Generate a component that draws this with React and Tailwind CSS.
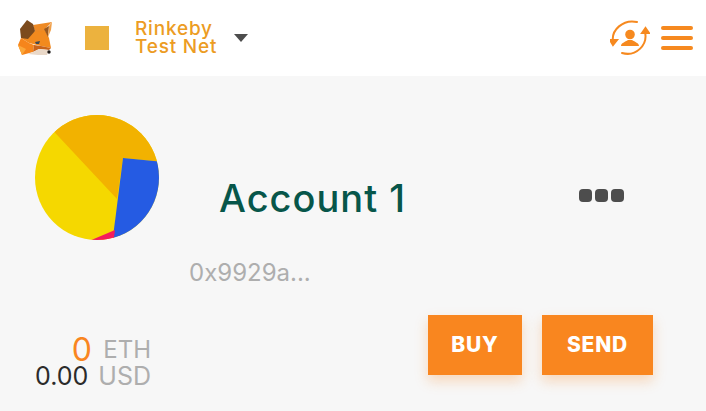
const FONT = "font-['Inter',sans-serif]";

function Fox() {
  return (
    <svg width="36" height="38" viewBox="0 0 36 38" className="shrink-0">
      <polygon points="3,19 17,12 26,9 31,19 33,29 23,27 11,24" fill="#f28a1e" />
      <polygon points="15,6 34,3 28,9 26,12 17,13" fill="#ee8a25" />
      <polygon points="9,1 2,10 3,19 10,20 17,12 15,5" fill="#7c4a1c" />
      <polygon points="26,10 31,7 30,18" fill="#99581f" />
      <polygon points="34,3 31,7 30,18 33,11" fill="#f0a04a" />
      <polygon points="3,19 0,26 4,36 15,33 16,26 11,24" fill="#f6851b" />
      <polygon points="0,26 4,36 8,30" fill="#fba73a" />
      <polygon points="16,26 23,27 33,29 31,31 21,30 15,33" fill="#c9641a" />
      <polygon points="15,33 21,30 31,31 29,36 20,36 10,35" fill="#e9d8c8" />
      <polygon points="17,23 22,22 21,25 18,25" fill="#3f4a55" />
      <circle cx="31" cy="33" r="1.7" fill="#1f1a17" />
    </svg>
  );
}

function AccountSwitch() {
  return (
    <svg width="40" height="38" viewBox="0 0 40 38" fill="none" stroke="#f6891f" strokeWidth="2" strokeLinecap="round" className="shrink-0">
      <path d="M3 23 C1 11 13 0 27 3" />
      <path d="M35 13 C38 26 26 38 12 34" />
      <path d="M0 21 L3 26 L7 21 Z" fill="#f6891f" />
      <path d="M32 14 L35.5 9 L39 14 Z" fill="#f6891f" />
      <circle cx="20" cy="15.5" r="4.8" fill="#f6891f" stroke="none" />
      <path d="M11 27 C11 24 15 23 18 21 L22 21 C25 23 29 24 29 27 Z" fill="#f6891f" stroke="none" />
    </svg>
  );
}

function Identicon() {
  return (
    <svg width="124" height="125" viewBox="0 0 124 125" className="shrink-0">
      <defs>
        <clipPath id="disc">
          <ellipse cx="62" cy="62.5" rx="62" ry="62.5" />
        </clipPath>
      </defs>
      <g clipPath="url(#disc)">
        <rect width="124" height="125" fill="#f5d800" />
        <polygon points="10,7 30,-2 140,-2 140,48 88,43 82,84" fill="#f2b200" />
        <polygon points="88,43 140,48 140,130 77,130" fill="#255be3" />
        <polygon points="54,126 80,115 78,130 54,130" fill="#f41c5c" />
      </g>
    </svg>
  );
}

function ActionButton({ children, width }) {
  return (
    <button className={`${width} h-[60px] bg-[#f9861f] text-white text-[21px] tracking-[0.8px] font-extrabold shadow-[0_6px_12px_rgba(249,134,31,0.28)]`}>
      {children}
    </button>
  );
}

export default function App() {
  return (
    <div className={`${FONT} w-[706px] h-[411px] flex flex-col bg-[#f7f7f7] overflow-hidden`}>
      <header className="h-[76px] bg-white flex items-center pl-[18px] pr-[13px]">
        <Fox />
        <div className="w-[24px] h-[24px] bg-[#ecb23e] ml-[31px]" />
        <div className="ml-[26px] text-[#ec9c23] text-[19px] leading-[18px] tracking-[0.8px] font-medium">
          <div>Rinkeby</div>
          <div>Test Net</div>
        </div>
        <div className="ml-[17px] w-0 h-0 border-x-[7.5px] border-x-transparent border-t-[8px] border-t-[#4d4d4d]" />
        <div className="ml-auto flex items-center gap-[11px]">
          <AccountSwitch />
          <div className="flex flex-col gap-[6.5px] w-[32px]">
            <div className="h-[3.5px] rounded-full bg-[#f6891f]" />
            <div className="h-[3.5px] rounded-full bg-[#f6891f]" />
            <div className="h-[3.5px] rounded-full bg-[#f6891f]" />
          </div>
        </div>
      </header>

      <main className="flex-1 flex flex-col">
        <div className="flex pl-[35px] pt-[39px]">
          <Identicon />
          <div className="ml-[60px] mt-[61px] w-[188px] text-[#07564a] text-[38px] leading-[44px] tracking-[1px] font-medium whitespace-nowrap">
            Account 1
          </div>
          <div className="ml-[172px] mt-[74px] flex gap-[3px] h-[13px]">
            <div className="w-[13px] h-[13px] rounded-[4px] bg-[#4d4d4d]" />
            <div className="w-[13px] h-[13px] rounded-[4px] bg-[#4d4d4d]" />
            <div className="w-[13px] h-[13px] rounded-[4px] bg-[#4d4d4d]" />
          </div>
        </div>
        <div className="pl-[189px] mt-[19px] text-[#aeaeae] text-[24px] leading-[28px]">
          0x9929a...
        </div>
        <div className="flex items-start mt-[28px] pl-[35px]">
          <div className="w-[116px] grid grid-cols-[57px_1fr] mt-[22px] text-[24px] leading-[26px]">
            <div className="text-right text-[#f9861f] text-[32px] leading-[26px]">0</div>
            <div className="text-right text-[#aeaeae]">ETH</div>
            <div className="text-right text-[#2b2b2b] text-[25px] pr-[4px]">0.00</div>
            <div className="text-right text-[#aeaeae] text-[25px]">USD</div>
          </div>
          <div className="ml-[277px] flex gap-[20px]">
            <ActionButton width="w-[94px]">BUY</ActionButton>
            <ActionButton width="w-[111px]">SEND</ActionButton>
          </div>
        </div>
      </main>
    </div>
  );
}
